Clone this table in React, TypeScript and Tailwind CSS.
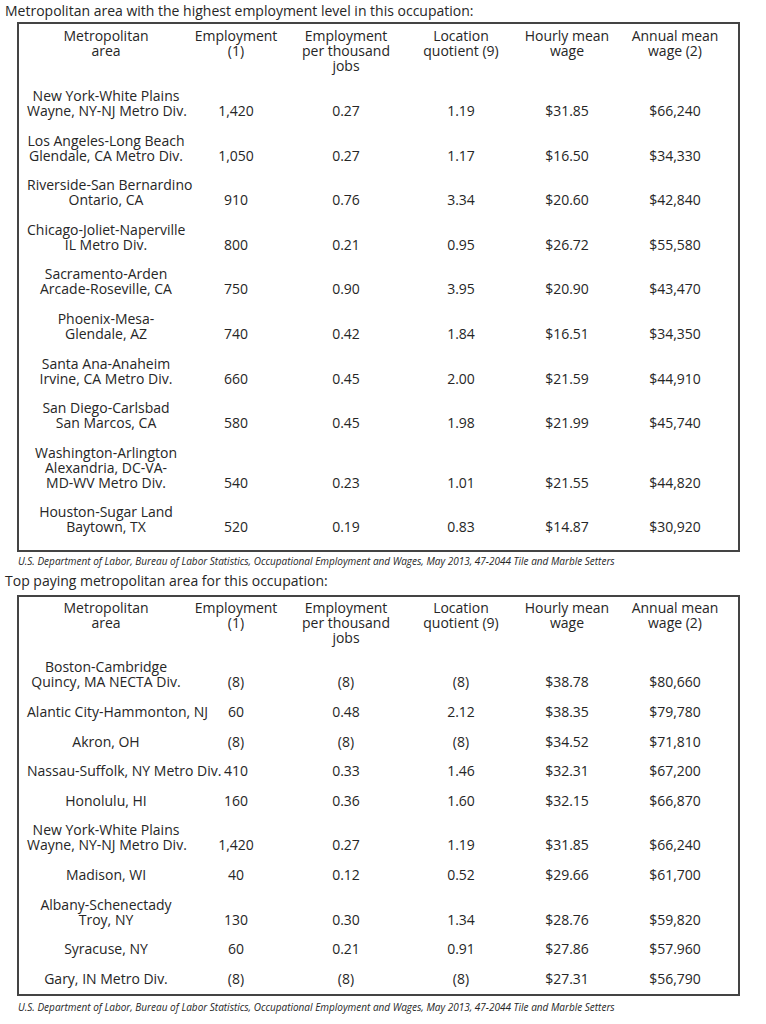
import React from "react";

type Row = { area: string[]; vals: string[] };

const table1: Row[] = [
  { area: ["New York-White Plains", "Wayne, NY-NJ Metro Div."], vals: ["1,420", "0.27", "1.19", "$31.85", "$66,240"] },
  { area: ["Los Angeles-Long Beach", "Glendale, CA Metro Div."], vals: ["1,050", "0.27", "1.17", "$16.50", "$34,330"] },
  { area: ["Riverside-San Bernardino", "Ontario, CA"], vals: ["910", "0.76", "3.34", "$20.60", "$42,840"] },
  { area: ["Chicago-Joliet-Naperville", "IL Metro Div."], vals: ["800", "0.21", "0.95", "$26.72", "$55,580"] },
  { area: ["Sacramento-Arden", "Arcade-Roseville, CA"], vals: ["750", "0.90", "3.95", "$20.90", "$43,470"] },
  { area: ["Phoenix-Mesa-", "Glendale, AZ"], vals: ["740", "0.42", "1.84", "$16.51", "$34,350"] },
  { area: ["Santa Ana-Anaheim", "Irvine, CA Metro Div."], vals: ["660", "0.45", "2.00", "$21.59", "$44,910"] },
  { area: ["San Diego-Carlsbad", "San Marcos, CA"], vals: ["580", "0.45", "1.98", "$21.99", "$45,740"] },
  { area: ["Washington-Arlington", "Alexandria, DC-VA-", "MD-WV Metro Div."], vals: ["540", "0.23", "1.01", "$21.55", "$44,820"] },
  { area: ["Houston-Sugar Land", "Baytown, TX"], vals: ["520", "0.19", "0.83", "$14.87", "$30,920"] },
];

const table2: Row[] = [
  { area: ["Boston-Cambridge", "Quincy, MA NECTA Div."], vals: ["(8)", "(8)", "(8)", "$38.78", "$80,660"] },
  { area: ["Alantic City-Hammonton, NJ"], vals: ["60", "0.48", "2.12", "$38.35", "$79,780"] },
  { area: ["Akron, OH"], vals: ["(8)", "(8)", "(8)", "$34.52", "$71,810"] },
  { area: ["Nassau-Suffolk, NY Metro Div."], vals: ["410", "0.33", "1.46", "$32.31", "$67,200"] },
  { area: ["Honolulu, HI"], vals: ["160", "0.36", "1.60", "$32.15", "$66,870"] },
  { area: ["New York-White Plains", "Wayne, NY-NJ Metro Div."], vals: ["1,420", "0.27", "1.19", "$31.85", "$66,240"] },
  { area: ["Madison, WI"], vals: ["40", "0.12", "0.52", "$29.66", "$61,700"] },
  { area: ["Albany-Schenectady", "Troy, NY"], vals: ["130", "0.30", "1.34", "$28.76", "$59,820"] },
  { area: ["Syracuse, NY"], vals: ["60", "0.21", "0.91", "$27.86", "$57.960"] },
  { area: ["Gary, IN Metro Div."], vals: ["(8)", "(8)", "(8)", "$27.31", "$56,790"] },
];

const header: string[][] = [
  ["Metropolitan", "area"],
  ["Employment", "(1)"],
  ["Employment", "per thousand", "jobs"],
  ["Location", "quotient (9)"],
  ["Hourly mean", "wage"],
  ["Annual mean", "wage (2)"],
];

const gridCls = "grid grid-cols-[158px_102px_118px_112px_100px_116px] pl-[8px]";

function Lines({ lines }: { lines: string[] }) {
  return (
    <div className="text-center whitespace-nowrap">
      {lines.map((l, i) => (
        <div key={i}>{l}</div>
      ))}
    </div>
  );
}

function Table({ rows, pb, pt, firstGap }: { rows: Row[]; pb: string; pt: string; firstGap: string }) {
  return (
    <div className={`ml-[17px] w-[723px] border-2 border-[#444] ${pt} ${pb}`}>
      <div className={gridCls}>
        {header.map((h, i) => (
          <div key={i} className="self-start">
            <Lines lines={h} />
          </div>
        ))}
      </div>
      {rows.map((r, ri) => (
        <div key={ri} className={`${gridCls} ${ri === 0 ? firstGap : "pt-[14.6px]"}`}>
          <div className="self-end">
            <Lines lines={r.area} />
          </div>
          {r.vals.map((v, vi) => (
            <div key={vi} className="self-end text-center whitespace-nowrap">
              {v}
            </div>
          ))}
        </div>
      ))}
    </div>
  );
}

const footnote =
  "U.S. Department of Labor, Bureau of Labor Statistics, Occupational Employment and Wages, May 2013, 47-2044 Tile and Marble Setters";

export default function App() {
  return (
    <div className="w-[766px] h-[1024px] bg-white text-[#262626] font-['Open_Sans',sans-serif] text-[14px] leading-[15px] overflow-hidden">
      <div className="pl-[5px] pt-[1px] text-[14px] leading-[20px]">
        Metropolitan area with the highest employment level in this occupation:
      </div>
      <div className="mt-[1px]">
        <Table rows={table1} pt="pt-[4px]" pb="pb-[16px]" firstGap="pt-[15px]" />
      </div>
      <div className="pl-[18px] pt-[2px] italic text-[10px] leading-[14px]">{footnote}</div>
      <div className="pl-[5px] pt-[3px] text-[14px] leading-[20px]">
        Top paying metropolitan area for this occupation:
      </div>
      <div className="mt-[4px]">
        <Table rows={table2} pt="pt-[3px]" pb="pb-[8px]" firstGap="pt-[14px]" />
      </div>
      <div className="pl-[18px] pt-[4px] italic text-[10px] leading-[14px]">{footnote}</div>
    </div>
  );
}
